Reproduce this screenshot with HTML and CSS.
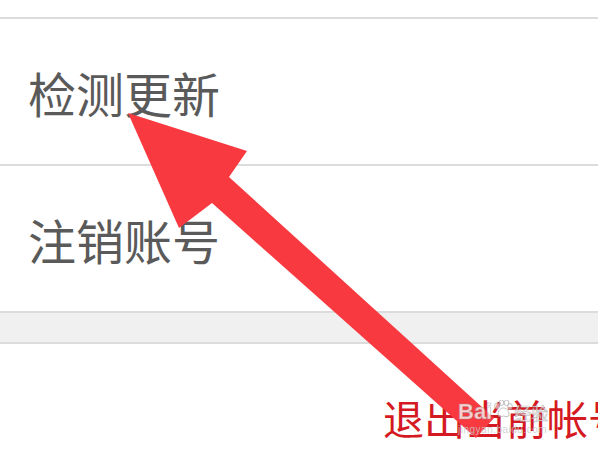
FILE: index.html
```html
<!DOCTYPE html>
<html lang="zh-CN">
<head>
    <meta charset="UTF-8">
    <meta name="viewport" content="width=device-width, initial-scale=1.0">
    <title>设置</title>
    <link rel="stylesheet" href="styles.css">
</head>
<body>
    <div class="page">
        <div class="top-gap"></div>
        <ul class="menu">
            <li class="menu-item">检测更新</li>
            <li class="menu-item">注销账号</li>
        </ul>
        <div class="band"></div>
        <div class="logout">退出当前帐号</div>

        <!-- 标注箭头 -->
        <svg class="arrow" width="598" height="459" viewBox="0 0 598 459">
            <polygon points="128,113 247,151 229,177 494,418 476,438 212,203 179,228" fill="#f83a40"/>
        </svg>

        <div class="watermark">
            <div class="wm-logo">
                <span class="wm-bai">Bai</span>
                <svg class="wm-paw" width="20" height="18" viewBox="0 0 20 18">
                    <ellipse cx="4" cy="6" rx="2.4" ry="3" />
                    <ellipse cx="8.5" cy="2.8" rx="2.3" ry="2.8" />
                    <ellipse cx="13.5" cy="2.8" rx="2.3" ry="2.8" />
                    <ellipse cx="17" cy="6.5" rx="2.3" ry="3" />
                    <path d="M5 15 C5 10 8 8 10.5 8 C13 8 16 10 16 15 C16 17 13 17 10.5 16 C8 17 5 17 5 15 Z" />
                </svg>
                <span class="wm-cn">经验</span>
            </div>
            <div class="wm-url">jingyan.baidu.com</div>
        </div>
    </div>
</body>
</html>
```

FILE: styles.css
```css
html, body {
    margin: 0;
    padding: 0;
}
body {
    background: #fff;
    font-family: "Noto Sans CJK SC", "Noto Sans", sans-serif;
}
.page {
    position: relative;
    width: 598px;
    height: 459px;
    overflow: hidden;
    background: #fff;
}
.top-gap {
    height: 17px;
}
.menu {
    list-style: none;
    margin: 0;
    padding: 0;
    border-top: 2px solid #dcdcdc;
}
.menu-item {
    display: flex;
    align-items: center;
    height: 145px;
    padding-left: 28px;
    font-size: 48px;
    line-height: 1;
    color: #5a5a5a;
    border-bottom: 2px solid #dcdcdc;
}
.band {
    height: 29px;
    background: #f0f0f0;
    border-bottom: 2px solid #dcdcdc;
}
.logout {
    margin-top: 53px;
    padding-left: 383px;
    font-size: 41px;
    line-height: 41px;
    color: #d51922;
    white-space: nowrap;
}
.arrow {
    position: absolute;
    left: 0;
    top: 0;
}
.watermark {
    position: absolute;
    left: 458px;
    top: 400px;
    color: rgba(255, 255, 255, 0.85);
    opacity: 0.9;
}
.wm-logo {
    display: flex;
    align-items: flex-end;
    gap: 1px;
}
.wm-bai {
    font-family: "Liberation Sans", Arial, sans-serif;
    font-weight: bold;
    font-size: 22px;
    line-height: 24px;
    -webkit-text-stroke: 0.6px rgba(150, 150, 150, 0.8);
}
.wm-paw {
    fill: rgba(255, 255, 255, 0.6);
    stroke: rgba(150, 150, 150, 0.8);
    stroke-width: 0.8;
    margin-bottom: 6px;
}
.wm-cn {
    font-size: 17px;
    line-height: 22px;
    -webkit-text-stroke: 0.5px rgba(150, 150, 150, 0.8);
}
.wm-url {
    font-family: "Liberation Sans", Arial, sans-serif;
    font-size: 10px;
    line-height: 12px;
    color: rgba(200, 200, 200, 0.9);
    letter-spacing: 0.5px;
}
```
